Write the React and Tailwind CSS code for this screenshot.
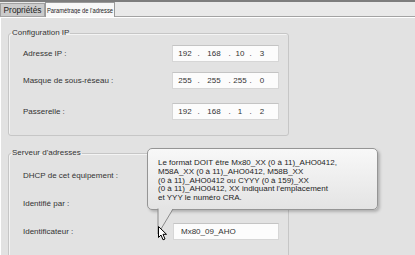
import React from "react";

const ipRows = [
  { label: "Adresse IP :", oct: ["192", "168", "10", "3"], mt: "mt-[7px]" },
  { label: "Masque de sous-réseau :", oct: ["255", "255", "255", "0"], mt: "mt-[10px]" },
  { label: "Passerelle :", oct: ["192", "168", "1", "2"], mt: "mt-[14px]" },
];

function IpBox({ oct }) {
  return (
    <div className="flex h-[17px] w-[107px] items-center border border-[#d6d6d6] border-t-[#c4c4c4] bg-[#fcfcfc] text-[#333]">
      <span className="w-[24px] text-center">{oct[0]}</span>
      <span className="w-[3px] text-center">.</span>
      <span className="w-[28px] text-center">{oct[1]}</span>
      <span className="w-[3px] text-center">.</span>
      <span className="w-[18px] text-center">{oct[2]}</span>
      <span className="w-[3px] text-center">.</span>
      <span className="w-[20px] text-center">{oct[3]}</span>
    </div>
  );
}

export default function App() {
  return (
    <div className="relative h-[255px] w-[415px] overflow-hidden bg-[#e2e2e2] font-['Liberation_Sans',Arial,sans-serif] text-[8px] leading-[10px] text-[#333]">
      {/* top line */}
      <div className="h-[2px] bg-[#7d7d7d]" />
      {/* tab strip */}
      <div className="flex h-[15px] items-end border-b border-[#a3a3a3] bg-[#e9e9e9]">
        <div className="flex h-[13px] w-[45px] items-center justify-center border border-b-0 border-[#a0a0a0] bg-[#cbcbcb] text-[8.3px] text-[#222]">
          Propriétés
        </div>
        <div className="relative -mb-[1px] flex h-[15px] w-[70px] items-center justify-center border border-b-0 border-[#9a9a9a] bg-[#f8f8f8] text-[#222]">
          <span className="inline-block scale-y-125 text-[5.8px]">Paramétrage de l'adresse</span>
        </div>
      </div>
      {/* content */}
      <div className="border-t border-l border-white pt-[10px]">
        <fieldset className="ml-[7px] w-[281px] rounded-[3px] border border-[#c6c6c6] pl-[2px] pb-[15px] shadow-[inset_1px_1px_0_#f4f4f4]">
          <legend className="px-[1px] leading-[10px] text-[#333]">Configuration IP</legend>
          <div className="pl-[12px]">
            {ipRows.map((r) => (
              <div key={r.label} className={`flex h-[17px] items-center ${r.mt}`}>
                <span className="w-[149px]">{r.label}</span>
                <IpBox oct={r.oct} />
              </div>
            ))}
          </div>
        </fieldset>

        <fieldset className="mt-[12px] ml-[7px] h-[120px] w-[281px] rounded-[3px] border border-[#c6c6c6] pl-[2px] shadow-[inset_1px_1px_0_#f4f4f4]">
          <legend className="px-[1px] leading-[10px] text-[#333]">Serveur d'adresses</legend>
          <div className="pl-[12px]">
            <div className="mt-[9px] flex h-[17px] items-center">
              <span className="w-[149px]">DHCP de cet équipement :</span>
            </div>
            <div className="mt-[11px] flex h-[17px] items-center">
              <span className="w-[149px]">Identifié par :</span>
            </div>
            <div className="mt-[11px] flex h-[17px] items-center">
              <span className="w-[150px]">Identificateur :</span>
              <div className="flex h-[17px] w-[106px] items-center border border-[#d6d6d6] border-t-[#c4c4c4] bg-[#fcfcfc] pl-[7px] text-[#333]">
                Mx80_09_AHO
              </div>
            </div>
          </div>
        </fieldset>
      </div>

      {/* tooltip */}
      <div className="absolute left-[147px] top-[148px] h-[62px] w-[231px] rounded-[5px] border border-[#959595] bg-gradient-to-b from-[#f8f8f8] to-[#e4e4e4] pl-[10px] pt-[10px] text-[8px] leading-[8.8px] text-[#1e1e1e] shadow-[2px_2px_3px_rgba(0,0,0,0.22)]">
        Le format DOIT être Mx80_XX (0 à 11)_AHO0412,
        <br />
        M58A_XX (0 à 11)_AHO0412, M58B_XX
        <br />
        (0 à 11)_AHO0412 ou CYYY (0 à 159)_XX
        <br />
        (0 à 11)_AHO0412, XX indiquant l'emplacement
        <br />
        et YYY le numéro CRA.
      </div>
      {/* tooltip tail */}
      <svg className="absolute left-[150px] top-[208px]" width="30" height="30" viewBox="0 0 30 30">
        <polygon points="8,0 23,0 8.5,26" fill="#e4e4e4" />
        <polyline points="8,0.5 8,26 23,1" fill="none" stroke="#8a8a8a" strokeWidth="1" />
      </svg>
      {/* mouse cursor */}
      <svg className="absolute left-[158px] top-[226px]" width="12" height="16" viewBox="0 0 12 16">
        <path
          d="M0.5 0.5 L0.5 11.5 L3 9 L5 13.8 L7 13 L5 8.3 L8.5 8.3 Z"
          fill="#fff"
          stroke="#000"
          strokeWidth="1"
          strokeLinejoin="miter"
        />
      </svg>
    </div>
  );
}
